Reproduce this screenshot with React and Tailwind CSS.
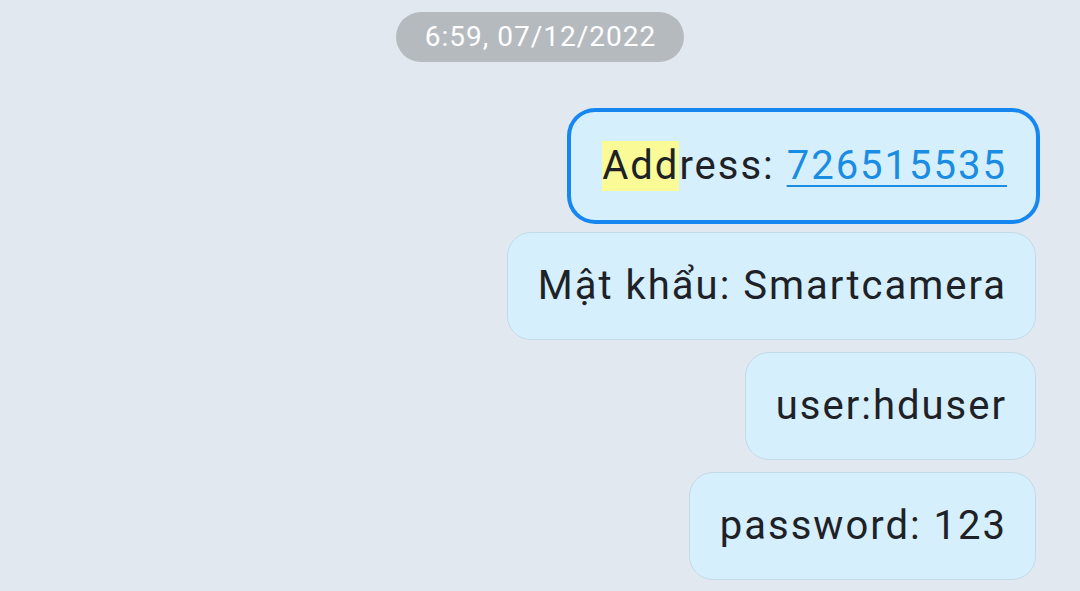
export default function App() {
  const bubble =
    "h-[108px] flex items-center pl-[30px] pr-[28px] rounded-[24px] bg-[#d5effd] border border-[#c3dbe9] text-[40px] tracking-[2px] text-[#1e2227] whitespace-nowrap";
  return (
    <div
      className="w-[1080px] h-[591px] bg-[#e2e8f0] overflow-hidden flex flex-col items-end pr-[44px]"
      style={{ fontFamily: "Roboto, 'Noto Sans', sans-serif" }}
    >
      <div className="self-center ml-[44px] mt-[12px] h-[50px] pl-[29px] pr-[28px] rounded-full bg-[#b5babf] text-white text-[28px] tracking-[1px] flex items-center">
        6:59, 07/12/2022
      </div>
      <div className={bubble + " mt-[50px] ring-4 ring-[#1687f0] border-transparent"}>
        <span className="bg-[#fafa96] leading-[50px]">Add</span>
        <span>ress:&nbsp;</span>
        <span className="text-[#1a8ce2] underline decoration-2 underline-offset-[6px]">726515535</span>
      </div>
      <div className={bubble + " mt-[12px]"}>Mật khẩu: Smartcamera</div>
      <div className={bubble + " mt-[12px]"}>user:hduser</div>
      <div className={bubble + " mt-[12px]"}>password: 123</div>
    </div>
  );
}
